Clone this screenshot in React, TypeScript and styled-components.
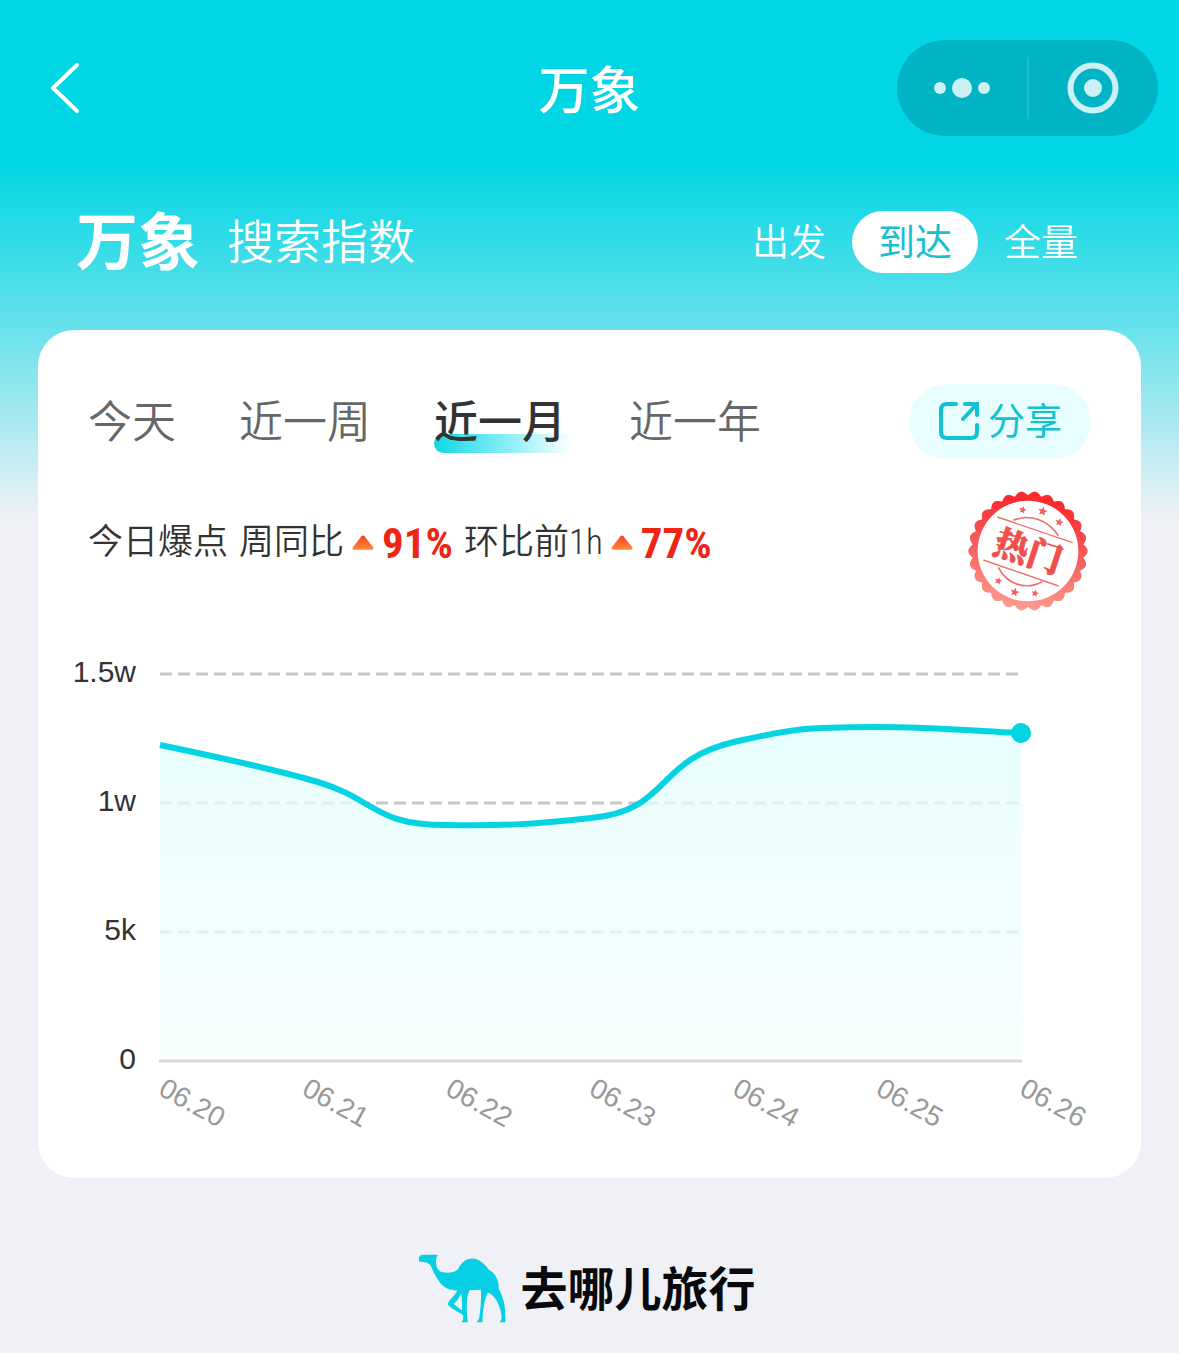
import React, { useState } from "react";
import styled, { createGlobalStyle, css } from "styled-components";

const GlobalStyle = createGlobalStyle`
  *, *::before, *::after { box-sizing: border-box; }
  body {
    margin: 0;
    background: #f0f1f6;
    font-family: "Noto Sans CJK SC", "Liberation Sans", sans-serif;
    color: #333;
  }
  button {
    border: 0;
    padding: 0;
    margin: 0;
    background: none;
    font: inherit;
    color: inherit;
    cursor: pointer;
  }
`;

const Page = styled.div`
  min-height: 100vh;
  background: linear-gradient(
    to bottom,
    #00d6e4 0,
    #00d6e4 160px,
    #5be0ea 310px,
    #f0f1f6 520px
  );
`;

const NavBar = styled.header`
  display: grid;
  grid-template-columns: 1fr auto 1fr;
  align-items: center;
  height: 176px;
  padding: 0 21px;
  color: #fff;
`;

const BackButton = styled.button`
  justify-self: start;
  width: 88px;
  height: 60px;
  svg { display: block; margin: 0 auto; }
`;

const NavTitle = styled.h1`
  margin: 0;
  padding-bottom: 2px;
  font-size: 51px;
  line-height: 60px;
  font-weight: 500;
`;

const Capsule = styled.div`
  justify-self: end;
  display: flex;
  align-items: center;
  width: 261px;
  height: 96px;
  border-radius: 48px;
  background: #00b4c5;
`;

const CapsuleButton = styled.button`
  flex: 1;
  display: flex;
  align-items: center;
  justify-content: center;
  height: 100%;
`;

const CapsuleDivider = styled.span`
  width: 2px;
  height: 62px;
  background: #1fbfce;
`;

const Heading = styled.section`
  display: flex;
  align-items: center;
  justify-content: space-between;
  height: 154px;
  padding: 0 75px 22px 76px;
  color: #fff;
`;

const HeadingText = styled.div`
  display: flex;
  align-items: center;
  gap: 27px;
  padding-bottom: 6px;
`;

const Brand = styled.h2`
  margin: 0;
  padding-bottom: 2px;
  font-size: 62px;
  line-height: 72px;
  font-weight: 700;
`;

const BrandNote = styled.span`
  font-size: 47px;
  line-height: 72px;
  font-weight: 350;
`;

const Segments = styled.div`
  display: flex;
`;

const Segment = styled.button<{ $active: boolean }>`
  height: 62px;
  padding: 0 26px 4px;
  border-radius: 31px;
  font-size: 37px;
  line-height: 56px;
  font-weight: 350;
  ${(p) =>
    p.$active &&
    css`
      background: #fff;
      color: #15c0cf;
      font-weight: 400;
    `}
`;

const Card = styled.main`
  margin: 0 38px;
  padding-top: 54px;
  border-radius: 36px;
  background: #fff;
  overflow: hidden;
`;

const TabRow = styled.div`
  display: flex;
  align-items: center;
  justify-content: space-between;
  padding: 0 50px;
`;

const Tabs = styled.div`
  display: flex;
  gap: 63px;
`;

const Tab = styled.button<{ $active: boolean }>`
  position: relative;
  z-index: 0;
  padding-bottom: 6px;
  font-size: 44px;
  line-height: 56px;
  color: #666;
  font-weight: 350;
  ${(p) =>
    p.$active &&
    css`
      color: #333;
      font-weight: 500;
      &::before {
        content: "";
        position: absolute;
        z-index: -1;
        left: 0;
        right: -6px;
        bottom: 0;
        height: 19px;
        border-radius: 10px 0 0 10px;
        background: linear-gradient(to right, #0fd8e6, #8feff6 55%, #fff);
      }
    `}
`;

const ShareButton = styled.button`
  display: flex;
  align-items: center;
  justify-content: center;
  gap: 8px;
  width: 182px;
  height: 75px;
  border-radius: 38px;
  background: #e8fdfe;
  color: #12c2d0;
`;

const ShareLabel = styled.span`
  padding-bottom: 6px;
  font-size: 37px;
  line-height: 56px;
`;

const StatRow = styled.div`
  display: flex;
  align-items: flex-start;
  justify-content: space-between;
  padding: 32px 53px 0 50px;
`;

const Stats = styled.div`
  display: flex;
  align-items: center;
  gap: 11px;
  height: 104px;
  font-family: "Roboto Condensed", "Noto Sans CJK SC", sans-serif;
  font-size: 35px;
  line-height: 50px;
`;

const Stat = styled.span`
  display: flex;
  align-items: center;
  gap: 8px;
  font-weight: 350;
`;

const Percent = styled.strong`
  font-size: 43px;
  font-weight: 700;
  color: #ee2414;
`;

const ChartSvg = styled.svg`
  display: block;
  width: 100%;
  height: auto;
  font-family: "Liberation Sans", sans-serif;
`;

const ValueLabel = styled.text`
  font-size: 30px;
  fill: #333;
`;

const DayLabel = styled.text`
  font-size: 28px;
  fill: #999;
`;

const Footer = styled.footer`
  display: flex;
  align-items: center;
  justify-content: center;
  gap: 15px;
  padding: 73px 6px 28px 0;
`;

const FooterName = styled.span`
  padding-bottom: 4px;
  color: #0a0a0c;
  font-size: 47px;
  line-height: 70px;
  font-weight: 700;
`;

const Rise = ({ id }: { id: string }) => (
  <svg width="22" height="16" viewBox="0 0 22 16" aria-hidden="true">
    <defs>
      <linearGradient id={id} x1="0" y1="0" x2="0" y2="1">
        <stop offset="0" stopColor="#f5401c" />
        <stop offset="1" stopColor="#ff8a3a" />
      </linearGradient>
    </defs>
    <path d="M9.5 1.2Q11 0 12.5 1.2L21.5 12.8Q22 14.6 20 14.8H2Q0 14.6.5 12.8Z" fill={`url(#${id})`} />
  </svg>
);

const starPath = (cx: number, cy: number, r: number, turn: number) =>
  Array.from({ length: 10 }, (_, i) => {
    const a = (i * Math.PI) / 5 - Math.PI / 2 + turn;
    const d = i % 2 ? r * 0.45 : r;
    return `${i ? "L" : "M"}${(cx + d * Math.cos(a)).toFixed(1)} ${(cy + d * Math.sin(a)).toFixed(1)}`;
  }).join("") + "Z";

const scallop = Array.from({ length: 720 }, (_, i) => {
  const a = (i * Math.PI) / 360;
  const d = 167 + 12 * Math.abs(Math.cos(13 * a));
  return `${i ? "L" : "M"}${(444 + d * Math.cos(a)).toFixed(1)} ${(541 + d * Math.sin(a)).toFixed(1)}`;
}).join("") + "Z";

const STARS = [
  [428, 418, 12], [488, 422, 15], [538, 455, 13],
  [355, 631, 12], [404, 665, 14], [465, 668, 12],
];

const Stamp = () => (
  <svg width="120" height="120" viewBox="264 361 360 360" role="img" aria-label="热门">
    <defs>
      <linearGradient id="stampInk" gradientUnits="userSpaceOnUse" x1="470" y1="400" x2="420" y2="720">
        <stop offset="0" stopColor="#fb2c2f" />
        <stop offset="0.45" stopColor="#f4605c" />
        <stop offset="1" stopColor="#ff9c8f" />
      </linearGradient>
    </defs>
    <path
      d={`${scallop}M293 541a151 151 0 1 0 302 0a151 151 0 1 0-302 0Z`}
      fill="url(#stampInk)"
      fillRule="evenodd"
    />
    <g fill="#f0625c">
      {STARS.map(([x, y, r]) => (
        <path key={`${x}-${y}`} d={starPath(x, y, r, 0.25)} />
      ))}
    </g>
    <g fill="none" stroke="#f0706a" strokeWidth="5">
      <path d="M352 439L578 516M310 568L536 646" strokeWidth="4" />
      <path d="M400 449C450 428 505 448 535 495" />
      <path d="M355 590C380 640 435 660 487 633" />
    </g>
    <text
      x="0"
      y="37"
      textAnchor="middle"
      transform="translate(444 543) rotate(18)"
      fontFamily='"Noto Serif CJK SC", "Noto Sans CJK SC", serif'
      fontWeight="900"
      fontSize="104"
      fill="#ee514d"
      stroke="#ee514d"
      strokeWidth="2"
    >
      热门
    </text>
  </svg>
);

const Camel = () => (
  <svg width="88" height="69" viewBox="54 41 265 206" aria-hidden="true">
    <path
      fill="#06cfe6"
      fillRule="evenodd"
      d="M57 50L64 42H114L109 52C106 75 112 90 125 94C145 99 165 96 175 85C185 65 200 54 217 54C240 54 255 72 268 88C285 98 298 115 297 145C310 168 319 195 317 246H300L306 235C305 205 290 165 264 156C258 172 249 195 248 246H231L238 235C243 205 245 170 243 148L209 149C201 168 198 195 204 246H186L190 235V225C175 212 150 205 143 190C150 175 165 165 173 150C160 149 150 147 140 143C118 130 105 105 92 75C85 66 75 65 57 63ZM184 158C178 175 168 184 161 191L187 210C187 190 187 175 184 158Z"
    />
  </svg>
);

const GRID = [
  { y: 63, label: "1.5w" },
  { y: 192, label: "1w" },
  { y: 321, label: "5k" },
  { y: 450, label: "0" },
];
const DAYS = ["06.20", "06.21", "06.22", "06.23", "06.24", "06.25", "06.26"];
const CURVE =
  "M122 134C170 144 232 157 280 171C339 189 335 214 409 214C465 215 500 213 553 207C632 200 617 149 696 131C750 119 760 116 840 116C890 116 940 120 983 122";

const Chart = () => (
  <ChartSvg viewBox="0 0 1103 567" role="img" aria-label="搜索指数">
    <defs>
      <linearGradient id="area" x1="0" y1="0" x2="0" y2="1">
        <stop offset="0" stopColor="#e0fdfd" stopOpacity="0.75" />
        <stop offset="1" stopColor="#f6fefe" stopOpacity="0.75" />
      </linearGradient>
    </defs>
    {GRID.slice(0, 3).map((g) => (
      <path key={g.y} d={`M122 ${g.y}H980`} stroke="#c8c8ca" strokeWidth="3" strokeDasharray="12 6" />
    ))}
    <path d={`${CURVE}V450H122Z`} fill="url(#area)" />
    <path d="M121 450H984" stroke="#d9dbdd" strokeWidth="3" />
    <path d={CURVE} fill="none" stroke="#04d3e2" strokeWidth="6" />
    <circle cx="983" cy="122" r="10" fill="#04d3e2" />
    {GRID.map((g) => (
      <ValueLabel key={g.label} x="98" y={g.y + 8} textAnchor="end">
        {g.label}
      </ValueLabel>
    ))}
    {DAYS.map((day, i) => (
      <DayLabel key={day} transform={`translate(${119 + i * 143.5} 483) rotate(29)`}>
        {day}
      </DayLabel>
    ))}
  </ChartSvg>
);

const SCOPES = ["出发", "到达", "全量"];
const RANGES = ["今天", "近一周", "近一月", "近一年"];

export default function App() {
  const [scope, setScope] = useState("到达");
  const [range, setRange] = useState("近一月");

  return (
    <Page>
      <GlobalStyle />
      <NavBar>
        <BackButton aria-label="返回">
          <svg width="50" height="60" viewBox="0 0 50 60" fill="none" stroke="#fff" strokeWidth="4">
            <path d="M37 7L13 30L37 53" strokeLinecap="round" strokeLinejoin="round" />
          </svg>
        </BackButton>
        <NavTitle>万象</NavTitle>
        <Capsule>
          <CapsuleButton aria-label="更多">
            <svg width="56" height="20" viewBox="0 0 56 20" fill="#ccf1f4">
              <circle cx="6" cy="10" r="6" />
              <circle cx="28" cy="10" r="10" />
              <circle cx="50" cy="10" r="6" />
            </svg>
          </CapsuleButton>
          <CapsuleDivider />
          <CapsuleButton aria-label="关闭">
            <svg width="52" height="52" viewBox="0 0 52 52">
              <circle cx="26" cy="26" r="22.5" fill="none" stroke="#ccf1f4" strokeWidth="6" />
              <circle cx="26" cy="26" r="9" fill="#ccf1f4" />
            </svg>
          </CapsuleButton>
        </Capsule>
      </NavBar>

      <Heading>
        <HeadingText>
          <Brand>万象</Brand>
          <BrandNote>搜索指数</BrandNote>
        </HeadingText>
        <Segments>
          {SCOPES.map((name) => (
            <Segment key={name} $active={name === scope} onClick={() => setScope(name)}>
              {name}
            </Segment>
          ))}
        </Segments>
      </Heading>

      <Card>
        <TabRow>
          <Tabs>
            {RANGES.map((name) => (
              <Tab key={name} $active={name === range} onClick={() => setRange(name)}>
                {name}
              </Tab>
            ))}
          </Tabs>
          <ShareButton>
            <svg width="42" height="40" viewBox="0 0 42 40" fill="none" stroke="#12c2d0" strokeWidth="4" strokeLinecap="round" aria-hidden="true">
              <path d="M18 2H9Q3 2 3 8V30Q3 36 9 36H33Q39 36 39 30V23" />
              <path d="M27 2H39V13M38 3L25 17" />
            </svg>
            <ShareLabel>分享</ShareLabel>
          </ShareButton>
        </TabRow>

        <StatRow>
          <Stats>
            <Stat>今日爆点</Stat>
            <Stat>
              周同比
              <Rise id="riseWeek" />
              <Percent>91%</Percent>
            </Stat>
            <Stat>
              环比前1h
              <Rise id="riseHour" />
              <Percent>77%</Percent>
            </Stat>
          </Stats>
          <Stamp />
        </StatRow>

        <Chart />
      </Card>

      <Footer>
        <Camel />
        <FooterName>去哪儿旅行</FooterName>
      </Footer>
    </Page>
  );
}
